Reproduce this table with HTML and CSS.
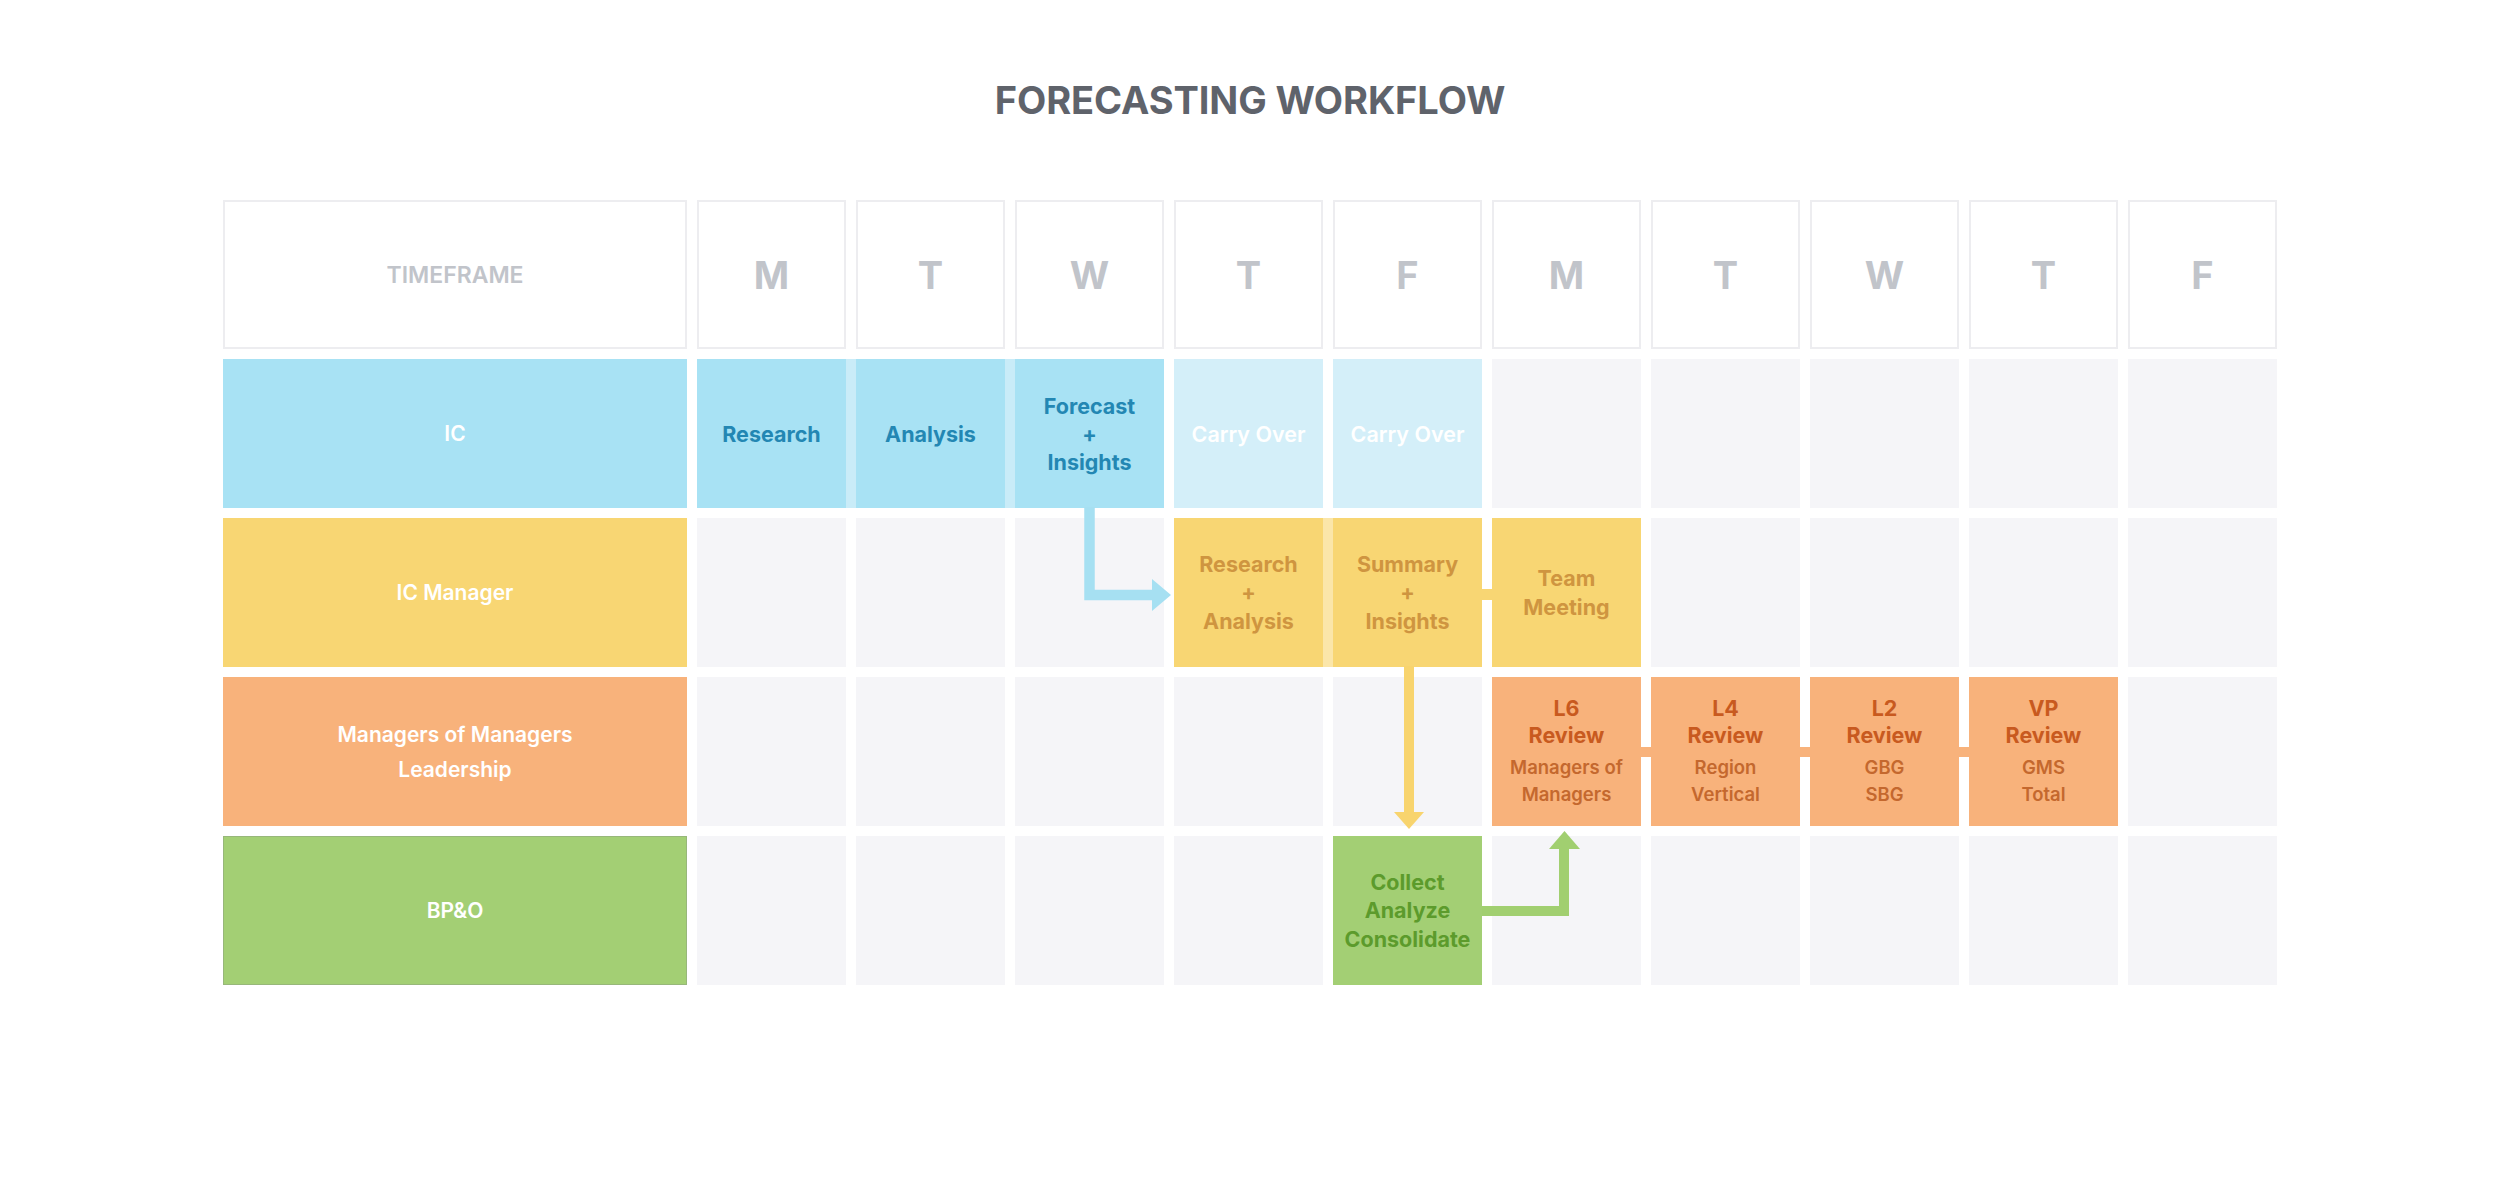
FILE: index.html
```html
<!DOCTYPE html>
<html lang="en">
<head>
<meta charset="utf-8">
<title>Forecasting Workflow</title>
<link rel="stylesheet" href="styles.css">
</head>
<body>
<main class="page">
  <h1 class="title">FORECASTING WORKFLOW</h1>
  <div class="board">
    <!-- header row -->
    <div class="head label-head">TIMEFRAME</div>
    <div class="head day">M</div>
    <div class="head day">T</div>
    <div class="head day">W</div>
    <div class="head day">T</div>
    <div class="head day">F</div>
    <div class="head day">M</div>
    <div class="head day">T</div>
    <div class="head day">W</div>
    <div class="head day">T</div>
    <div class="head day">F</div>

    <!-- IC -->
    <div class="lane lane-blue">IC</div>
    <div class="cell c-blue">Research</div>
    <div class="cell c-blue">Analysis</div>
    <div class="cell c-blue">Forecast<br>+<br>Insights</div>
    <div class="cell c-carry">Carry Over</div>
    <div class="cell c-carry">Carry Over</div>
    <div class="cell"></div>
    <div class="cell"></div>
    <div class="cell"></div>
    <div class="cell"></div>
    <div class="cell"></div>

    <!-- IC Manager -->
    <div class="lane lane-yellow">IC Manager</div>
    <div class="cell"></div>
    <div class="cell"></div>
    <div class="cell"></div>
    <div class="cell c-yellow">Research<br>+<br>Analysis</div>
    <div class="cell c-yellow">Summary<br>+<br>Insights</div>
    <div class="cell c-yellow">Team<br>Meeting</div>
    <div class="cell"></div>
    <div class="cell"></div>
    <div class="cell"></div>
    <div class="cell"></div>

    <!-- Managers of Managers -->
    <div class="lane lane-orange">Managers of Managers<br>Leadership</div>
    <div class="cell"></div>
    <div class="cell"></div>
    <div class="cell"></div>
    <div class="cell"></div>
    <div class="cell"></div>
    <div class="cell c-orange"><span class="rv">L6<br>Review</span><span class="sub">Managers of<br>Managers</span></div>
    <div class="cell c-orange"><span class="rv">L4<br>Review</span><span class="sub">Region<br>Vertical</span></div>
    <div class="cell c-orange"><span class="rv">L2<br>Review</span><span class="sub">GBG<br>SBG</span></div>
    <div class="cell c-orange"><span class="rv">VP<br>Review</span><span class="sub">GMS<br>Total</span></div>
    <div class="cell"></div>

    <!-- BP&O -->
    <div class="lane lane-green">BP&amp;O</div>
    <div class="cell"></div>
    <div class="cell"></div>
    <div class="cell"></div>
    <div class="cell"></div>
    <div class="cell c-green">Collect<br>Analyze<br>Consolidate</div>
    <div class="cell"></div>
    <div class="cell"></div>
    <div class="cell"></div>
    <div class="cell"></div>
    <div class="cell"></div>

    <svg class="flows" viewBox="0 0 2054 785" width="2054" height="785" aria-hidden="true">
      <!-- light fills between linked cells -->
      <rect x="623" y="159" width="10" height="149" fill="#c9ecf8"/>
      <rect x="782" y="159" width="10" height="149" fill="#c9ecf8"/>
      <rect x="1100" y="318" width="10" height="149" fill="#fbe6a9"/>
      <!-- small connectors -->
      <rect x="1259" y="389" width="10" height="11" fill="#f8d673"/>
      <rect x="1418" y="547" width="10" height="10" fill="#f8b27b"/>
      <rect x="1577" y="547" width="10" height="10" fill="#f8b27b"/>
      <rect x="1736" y="547" width="10" height="10" fill="#f8b27b"/>
      <!-- blue arrow -->
      <path d="M866.5 307 V395 H931" fill="none" stroke="#a6e0f2" stroke-width="10.5" stroke-linejoin="miter"/>
      <polygon points="929,379 948,395 929,411" fill="#a6e0f2"/>
      <!-- yellow arrow -->
      <path d="M1186 466 V614" fill="none" stroke="#f8d46e" stroke-width="10"/>
      <polygon points="1171,612 1201,612 1186,629" fill="#f8d46e"/>
      <!-- green arrow -->
      <path d="M1259 711 H1341 V647" fill="none" stroke="#a1cf70" stroke-width="10" stroke-linejoin="miter"/>
      <polygon points="1326,649 1357,649 1341.5,631" fill="#a1cf70"/>
    </svg>
  </div>
</main>
</body>
</html>
```

FILE: styles.css
```css
* {
  box-sizing: border-box;
}

html, body {
  margin: 0;
  padding: 0;
  background: #ffffff;
}

body {
  font-family: Inter, "Liberation Sans", Arial, sans-serif;
  -webkit-font-smoothing: antialiased;
}

.page {
  width: 2500px;
  min-height: 1184px;
  padding-top: 77px;
}

.title {
  margin: 0;
  height: 46px;
  line-height: 46px;
  text-align: center;
  font-size: 38px;
  font-weight: 700;
  letter-spacing: -0.1px;
  color: #5f636b;
}

.board {
  position: relative;
  width: 2054px;
  margin: 77px auto 0;
  display: grid;
  grid-template-columns: 464px repeat(10, 149px);
  grid-template-rows: repeat(5, 149px);
  gap: 10px;
}

.head {
  display: flex;
  align-items: center;
  justify-content: center;
  background: #ffffff;
  border: 2px solid #ededf0;
  color: #c1c4ca;
  font-weight: 700;
}

.label-head {
  font-size: 23px;
  font-weight: 600;
}

.day {
  font-size: 38px;
}

.lane {
  display: flex;
  align-items: center;
  justify-content: center;
  text-align: center;
  color: #ffffff;
  font-size: 21px;
  font-weight: 600;
  line-height: 35px;
}

.lane-blue { background: #a8e2f4; }
.lane-yellow { background: #f8d673; }
.lane-orange { background: #f8b27b; }
.lane-green {
  background: #a3cf74;
  border: 1.5px solid #97b77a;
}

.cell {
  display: flex;
  flex-direction: column;
  align-items: center;
  justify-content: center;
  text-align: center;
  background: #f5f5f8;
  font-size: 21.5px;
  font-weight: 700;
  line-height: 28px;
}

.c-blue {
  background: #a8e2f4;
  color: #2387b3;
}

.c-carry {
  background: #d4eff9;
  color: #ffffff;
  font-weight: 600;
}

.c-yellow {
  background: #f8d673;
  color: #cf9540;
  line-height: 28.5px;
}

.c-orange {
  background: #f8b27b;
  color: #c85a1f;
}

.c-orange .rv {
  display: block;
  line-height: 27px;
}

.c-orange .sub {
  display: block;
  margin-top: 5px;
  font-size: 18.5px;
  font-weight: 600;
  line-height: 27px;
  color: #c4682e;
}

.c-green {
  background: #a3cf74;
  color: #5c9b2c;
  line-height: 28.5px;
}

.flows {
  position: absolute;
  left: 0;
  top: 0;
  pointer-events: none;
}
```
